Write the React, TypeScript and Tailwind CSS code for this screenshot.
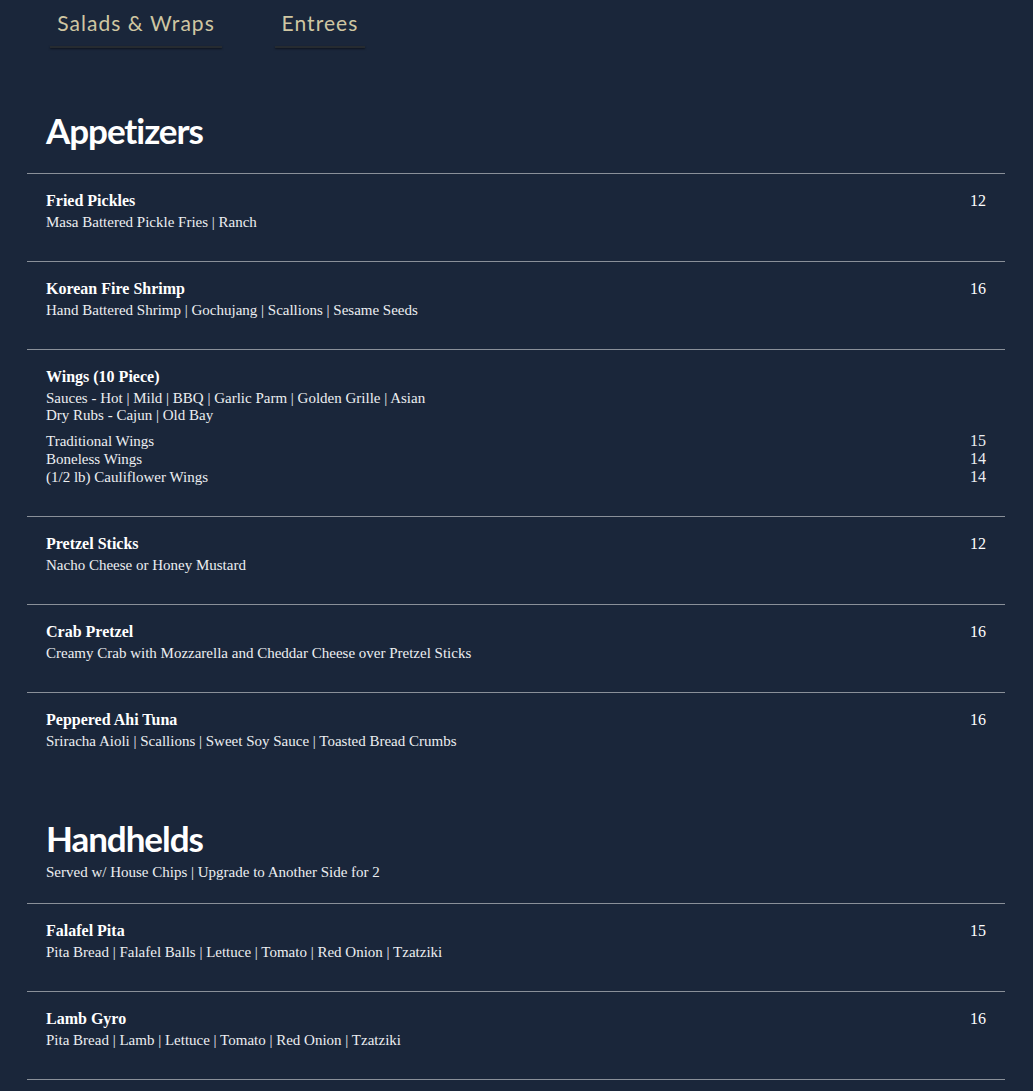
import React from "react";

type Item = { name: string; desc?: string[]; price?: string; sub?: { label: string; price: string }[] };

const appetizers: Item[] = [
  { name: "Fried Pickles", desc: ["Masa Battered Pickle Fries | Ranch"], price: "12" },
  { name: "Korean Fire Shrimp", desc: ["Hand Battered Shrimp | Gochujang | Scallions | Sesame Seeds"], price: "16" },
  {
    name: "Wings (10 Piece)",
    desc: ["Sauces - Hot | Mild | BBQ | Garlic Parm | Golden Grille | Asian", "Dry Rubs - Cajun | Old Bay"],
    sub: [
      { label: "Traditional Wings", price: "15" },
      { label: "Boneless Wings", price: "14" },
      { label: "(1/2 lb) Cauliflower Wings", price: "14" },
    ],
  },
  { name: "Pretzel Sticks", desc: ["Nacho Cheese or Honey Mustard"], price: "12" },
  { name: "Crab Pretzel", desc: ["Creamy Crab with Mozzarella and Cheddar Cheese over Pretzel Sticks"], price: "16" },
  { name: "Peppered Ahi Tuna", desc: ["Sriracha Aioli | Scallions | Sweet Soy Sauce | Toasted Bread Crumbs"], price: "16" },
];

const handhelds: Item[] = [
  { name: "Falafel Pita", desc: ["Pita Bread | Falafel Balls | Lettuce | Tomato | Red Onion | Tzatziki"], price: "15" },
  { name: "Lamb Gyro", desc: ["Pita Bread | Lamb | Lettuce | Tomato | Red Onion | Tzatziki"], price: "16" },
];

function Row({ item }: { item: Item }) {
  return (
    <div className="border-t border-[#8a9099] px-[19px] pt-[16px] pb-[30px]">
      <div className="flex justify-between items-start">
        <div className="text-[16px] leading-[22px] font-bold text-white">{item.name}</div>
        {item.price && <div className="text-[16px] leading-[22px] text-white">{item.price}</div>}
      </div>
      {item.desc && (
        <div className="mt-[2px]">
          {item.desc.map((d) => (
            <div key={d} className="text-[15px] leading-[17px] text-[#eceef1]">
              {d}
            </div>
          ))}
        </div>
      )}
      {item.sub && (
        <div className="mt-[8px]">
          {item.sub.map((s) => (
            <div key={s.label} className="flex justify-between text-[15px] leading-[18px] text-[#eceef1]">
              <span>{s.label}</span>
              <span className="text-[16px]">{s.price}</span>
            </div>
          ))}
        </div>
      )}
    </div>
  );
}

function Tab({ label, w }: { label: string; w: string }) {
  return (
    <div className={`${w} flex flex-col items-center`}>
      <div className="h-[38px] flex items-center text-[21px] tracking-[0.05em] text-[#cfc6a2]" style={{ fontFamily: "Lato, sans-serif" }}>
        {label}
      </div>
      <div className="mt-[4px] h-[2px] w-full bg-[#262b30] shadow-[0_1px_2px_rgba(0,0,0,0.5)]" />
    </div>
  );
}

export default function App() {
  return (
    <div className="min-h-[1091px] bg-[#1a263a] overflow-hidden" style={{ fontFamily: '"Liberation Serif", serif' }}>
      <div className="flex gap-[53px] pl-[50px] pt-[4px]">
        <Tab label="Salads & Wraps" w="w-[172px]" />
        <Tab label="Entrees" w="w-[90px]" />
      </div>
      <div className="px-[27px] pr-[28px]">
        <div className="pt-[62px] pb-[23px] px-[19px]">
          <h2 className="text-[35px] leading-[40px] font-bold tracking-[-0.03em] text-white" style={{ fontFamily: "Lato, sans-serif" }}>
            Appetizers
          </h2>
        </div>
        {appetizers.map((it) => (
          <Row key={it.name} item={it} />
        ))}
        <div className="pt-[38px] pb-[22px] px-[19px]">
          <h2 className="text-[35px] leading-[40px] font-bold tracking-[-0.03em] text-white" style={{ fontFamily: "Lato, sans-serif" }}>
            Handhelds
          </h2>
          <div className="mt-[6px] text-[15px] leading-[17px] text-[#eceef1]">Served w/ House Chips | Upgrade to Another Side for 2</div>
        </div>
        {handhelds.map((it) => (
          <Row key={it.name} item={it} />
        ))}
        <div className="border-t border-[#8a9099] h-[20px]" />
      </div>
    </div>
  );
}
